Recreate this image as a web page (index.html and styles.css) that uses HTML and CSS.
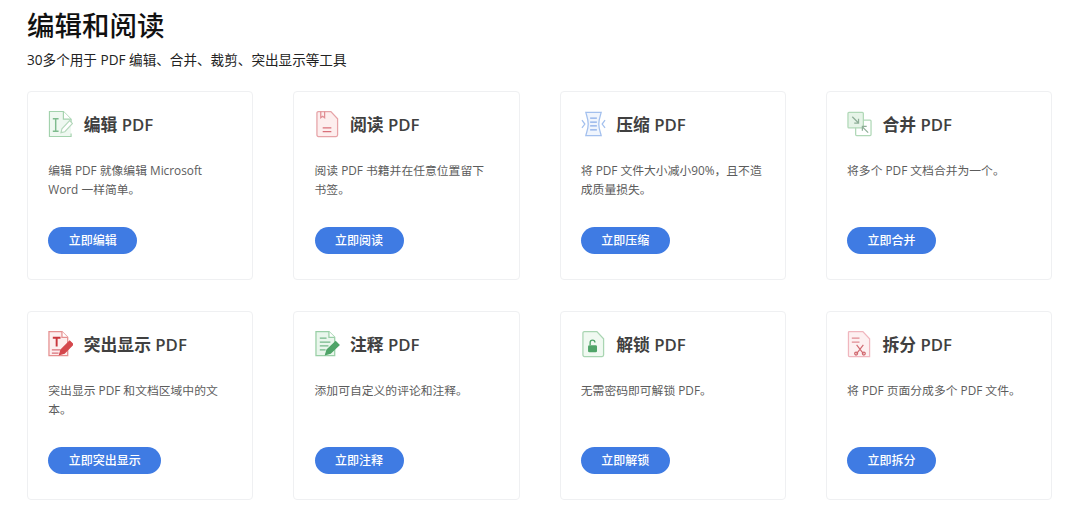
FILE: index.html
```html
<!DOCTYPE html>
<html lang="zh-CN">
<head>
<meta charset="utf-8">
<title>编辑和阅读</title>
<link rel="stylesheet" href="styles.css">
</head>
<body>
<main class="page">
  <h1 class="heading">编辑和阅读</h1>
  <p class="lead">30多个用于 PDF 编辑、合并、裁剪、突出显示等工具</p>
  <section class="grid">
    <article class="card">
      <header class="card-head">
        <svg class="icon" viewBox="0 0 26 28" fill="none" stroke="#a3d2ad" stroke-width="1.200">
          <path d="M24 13V9l-8-8H1.500v26H24v-3" fill="#eff8f1"/>
          <path d="M16 1v8h8" fill="#fff"/>
          <path d="M5 8.500h6M5 21.500h6M8 8.500v13" stroke="#7fbb8e" stroke-width="1.500"/>
          <path d="M13.500 23l1-4 8-8.500 3 3-8 8.500z" fill="#fff" stroke="#b5d8bc"/>
        </svg>
        <h2 class="card-title">编辑 PDF</h2>
      </header>
      <p class="desc">编辑 PDF 就像编辑 Microsoft Word 一样简单。</p>
      <a class="btn">立即编辑</a>
    </article>
    <article class="card">
      <header class="card-head">
        <svg class="icon" viewBox="0 0 26 28" fill="none" stroke="#e6a3a7" stroke-width="1.300">
          <path d="M3.500 1h13l7 7.500V25.500a1.500 1.500 0 0 1-1.500 1.500H3.500A1.500 1.500 0 0 1 2 25.500V2.500A1.500 1.500 0 0 1 3.500 1z" fill="#fdeeee"/>
          <path d="M6 1v6.500l2-1.500 2 1.500V1" stroke="#e08e94"/>
          <path d="M8 18h9M8 22h9" stroke="#d9707a"/>
        </svg>
        <h2 class="card-title">阅读 PDF</h2>
      </header>
      <p class="desc">阅读 PDF 书籍并在任意位置留下<span class="keep">书签。</span></p>
      <a class="btn">立即阅读</a>
    </article>
    <article class="card">
      <header class="card-head">
        <svg class="icon" viewBox="0 0 26 28" fill="none" stroke="#a3c0ee" stroke-width="1.300">
          <path d="M5 2h16c-1 4-2.500 7-2.500 12S20 22 21 26H5c1-4 2.500-7 2.500-12S6 6 5 2z" fill="#f0f5fd"/>
          <path d="M9.500 8h7M9.500 12h7M9.500 16h7M9.500 20h7" stroke="#87abe8"/>
          <path d="M1 10l3 4-3 4M25 10l-3 4 3 4"/>
        </svg>
        <h2 class="card-title">压缩 PDF</h2>
      </header>
      <p class="desc">将 PDF 文件大小减小90%，且不造成质量损失。</p>
      <a class="btn">立即压缩</a>
    </article>
    <article class="card">
      <header class="card-head">
        <svg class="icon" viewBox="0 0 26 28" fill="none" stroke="#b0d8b7" stroke-width="1.300">
          <rect x="9" y="10" width="16" height="16" rx="1" fill="#fff"/>
          <rect x="1" y="2" width="16" height="16" rx="1" fill="#e6f4e8"/>
          <path d="M5.500 6.500l6.500 6.500M12 8.500V13H7.500" stroke="#8fae98"/>
          <path d="M22 23l-6-6M16 21v-4.500h4.500" stroke="#8fae98"/>
        </svg>
        <h2 class="card-title">合并 PDF</h2>
      </header>
      <p class="desc">将多个 PDF 文档合并为一个。</p>
      <a class="btn">立即合并</a>
    </article>
    <article class="card">
      <header class="card-head">
        <svg class="icon" viewBox="0 0 26 28" fill="none" stroke="#e58f8f" stroke-width="1.300">
          <path d="M1 1h13.500l6 6v19H1z" fill="#fdeeee"/>
          <path d="M14.500 1v6h6" fill="#fff"/>
          <path d="M5 7.500h8M9 7.500v9" stroke="#c9363c" stroke-width="2"/>
          <path d="M4 20h9M4 23.500h7" stroke="#d9707a"/>
          <path d="M12 25l1.500-5 9-9 3.500 3.500-9 9z" fill="#d4474c" stroke="#d4474c"/>
        </svg>
        <h2 class="card-title">突出显示 PDF</h2>
      </header>
      <p class="desc">突出显示 PDF 和文档区域中的文本。</p>
      <a class="btn">立即突出显示</a>
    </article>
    <article class="card">
      <header class="card-head">
        <svg class="icon" viewBox="0 0 26 28" fill="none" stroke="#99cfa6" stroke-width="1.300">
          <path d="M1 1h13.500l6 6v19H1z" fill="#e9f6ec"/>
          <path d="M14.500 1v6h6" fill="#fff"/>
          <path d="M5 8h7M5 12h11M5 16h9M5 20h6" stroke="#74b888"/>
          <path d="M11 25l1.500-5 9-8.500 3.500 3.500-9 8.500z" fill="#4fa468" stroke="#4fa468"/>
        </svg>
        <h2 class="card-title">注释 PDF</h2>
      </header>
      <p class="desc">添加可自定义的评论和注释。</p>
      <a class="btn">立即注释</a>
    </article>
    <article class="card">
      <header class="card-head">
        <svg class="icon" viewBox="0 0 26 28" fill="none" stroke="#a9d5b2" stroke-width="1.300">
          <path d="M3.500 1h13l7 7.500V25.500a1.500 1.500 0 0 1-1.500 1.500H3.500A1.500 1.500 0 0 1 2 25.500V2.500A1.500 1.500 0 0 1 3.500 1z" fill="#f0f9f1"/>
          <path d="M9.500 15v-2.500a2.500 2.500 0 0 1 5 0" stroke="#4fa468" stroke-width="1.400"/>
          <rect x="8" y="16" width="8" height="6" rx="0.800" fill="#4fa468" stroke="#4fa468"/>
        </svg>
        <h2 class="card-title">解锁 PDF</h2>
      </header>
      <p class="desc">无需密码即可解锁 PDF。</p>
      <a class="btn">立即解锁</a>
    </article>
    <article class="card">
      <header class="card-head">
        <svg class="icon" viewBox="0 0 26 28" fill="none" stroke="#f0b6be" stroke-width="1.300">
          <path d="M2.500 1h14l7 7.500V27H2.500a1 1 0 0 1-1-1V2a1 1 0 0 1 1-1z" fill="#fdf0f1"/>
          <path d="M5 8h8M5 12h8" stroke="#df8a92"/>
          <path d="M10 15l7 9M17 15l-7 9" stroke="#d0686f" stroke-width="1.200"/>
          <circle cx="9.500" cy="24" r="1.500" stroke="#d0686f"/>
          <circle cx="17.500" cy="24" r="1.500" stroke="#d0686f"/>
        </svg>
        <h2 class="card-title">拆分 PDF</h2>
      </header>
      <p class="desc">将 PDF 页面分成多个 PDF 文件。</p>
      <a class="btn">立即拆分</a>
    </article>
  </section>
</main>
</body>
</html>
```

FILE: styles.css
```css
* { box-sizing: border-box; }
html, body { margin: 0; background: #fff; }
body {
  font-family: "Open Sans", "Noto Sans CJK SC", sans-serif;
  color: #222;
}
.page { padding: 7px 28px 0 27px; }
.heading {
  margin: 0;
  font-size: 27.500px;
  line-height: 38px;
  font-weight: 500;
  color: #111;
}
.lead {
  margin: 5px 0 0;
  font-size: 13.600px;
  line-height: 20px;
  font-weight: 400;
  color: #222;
}
.grid {
  margin-top: 21px;
  display: grid;
  grid-template-columns: repeat(4, 1fr);
  column-gap: 40px;
  row-gap: 31px;
}
.card {
  height: 189px;
  padding: 18px 20px 25.500px 20.300px;
  border: 1px solid #eff0f2;
  border-radius: 4px;
  display: flex;
  flex-direction: column;
  align-items: flex-start;
}
.card-head {
  display: flex;
  align-items: center;
  height: 28px;
  gap: 10.500px;
}
.icon { width: 25px; height: 28px; flex: none; }
.card-title {
  margin: 0;
  font-size: 16.800px;
  font-weight: 600;
  color: #404040;
  white-space: nowrap;
}
.desc {
  margin: 23px 0 0;
  font-size: 11.800px;
  line-height: 19px;
  font-weight: 400;
  color: #5c5c5c;
}
.keep { white-space: nowrap; }
.btn {
  margin-top: auto;
  height: 27px;
  padding: 0 20.500px;
  border-radius: 14px;
  background: #3f7be3;
  color: #fff;
  font-size: 12px;
  font-weight: 500;
  line-height: 27px;
}
```
